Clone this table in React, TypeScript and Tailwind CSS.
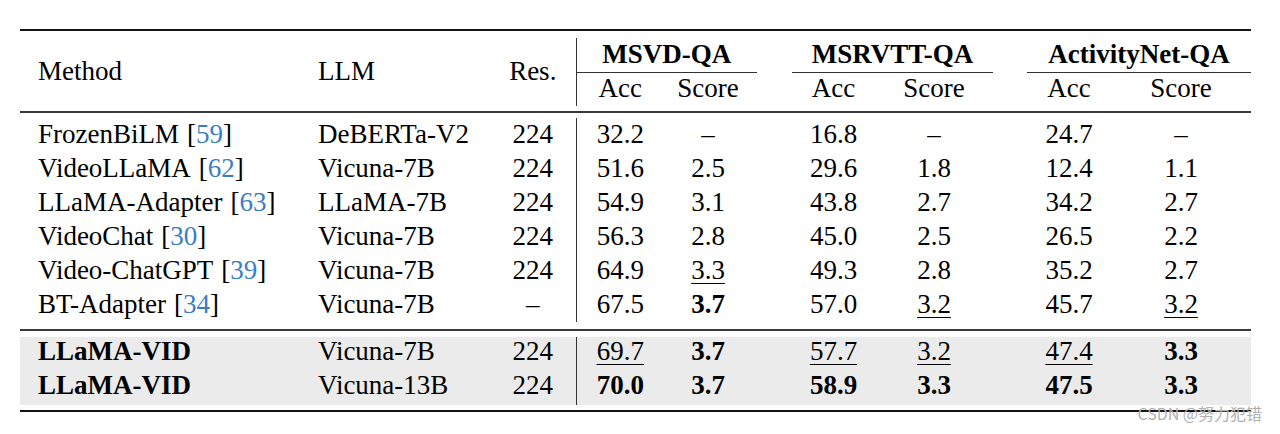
type Cell = { v: string; b?: boolean; u?: boolean };

type Row = {
  method: string;
  cite?: string;
  llm: string;
  res: string;
  vals: Cell[];
  ours?: boolean;
};

const c = (v: string, opts: { b?: boolean; u?: boolean } = {}): Cell => ({ v, ...opts });

const BASELINES: Row[] = [
  { method: 'FrozenBiLM', cite: '59', llm: 'DeBERTa-V2', res: '224', vals: [c('32.2'), c('–'), c('16.8'), c('–'), c('24.7'), c('–')] },
  { method: 'VideoLLaMA', cite: '62', llm: 'Vicuna-7B', res: '224', vals: [c('51.6'), c('2.5'), c('29.6'), c('1.8'), c('12.4'), c('1.1')] },
  { method: 'LLaMA-Adapter', cite: '63', llm: 'LLaMA-7B', res: '224', vals: [c('54.9'), c('3.1'), c('43.8'), c('2.7'), c('34.2'), c('2.7')] },
  { method: 'VideoChat', cite: '30', llm: 'Vicuna-7B', res: '224', vals: [c('56.3'), c('2.8'), c('45.0'), c('2.5'), c('26.5'), c('2.2')] },
  { method: 'Video-ChatGPT', cite: '39', llm: 'Vicuna-7B', res: '224', vals: [c('64.9'), c('3.3', { u: true }), c('49.3'), c('2.8'), c('35.2'), c('2.7')] },
  { method: 'BT-Adapter', cite: '34', llm: 'Vicuna-7B', res: '–', vals: [c('67.5'), c('3.7', { b: true }), c('57.0'), c('3.2', { u: true }), c('45.7'), c('3.2', { u: true })] },
];

const OURS: Row[] = [
  { method: 'LLaMA-VID', llm: 'Vicuna-7B', res: '224', ours: true, vals: [c('69.7', { u: true }), c('3.7', { b: true }), c('57.7', { u: true }), c('3.2', { u: true }), c('47.4', { u: true }), c('3.3', { b: true })] },
  { method: 'LLaMA-VID', llm: 'Vicuna-13B', res: '224', ours: true, vals: [c('70.0', { b: true }), c('3.7', { b: true }), c('58.9', { b: true }), c('3.3', { b: true }), c('47.5', { b: true }), c('3.3', { b: true })] },
];

function Rule({ thick }: { thick?: boolean }) {
  return (
    <tr>
      <td colSpan={11} className={`p-0 ${thick ? 'h-[2px] bg-[#141414]' : 'h-[2px] bg-[#3a3a3a]'}`} />
    </tr>
  );
}

function Spacer({ h }: { h: string }) {
  return (
    <tr className={h}>
      <td colSpan={11} className="p-0" />
    </tr>
  );
}

function Value({ cell, className = '' }: { cell: Cell; className?: string }) {
  return (
    <td className={`p-0 text-center ${className}`}>
      <span
        className={`${cell.b ? 'font-bold' : ''} ${cell.u ? 'underline decoration-1 underline-offset-[4px]' : ''}`}
      >
        {cell.v}
      </span>
    </td>
  );
}

function DataRow({ row }: { row: Row }) {
  const shade = row.ours ? 'bg-[#ebebeb]' : '';
  const pad = row.ours ? 'pb-[4px]' : '';
  return (
    <tr className={`h-[34px] ${shade}`}>
      <td className={`p-0 pl-[18px] ${pad} ${row.ours ? 'font-bold' : ''}`}>
        {row.method}
        {row.cite && (
          <span className="pl-[8px]">
            [<span className="text-[#3b7ec3]">{row.cite}</span>]
          </span>
        )}
      </td>
      <td className={`p-0 pl-[18px] ${pad}`}>{row.llm}</td>
      <td className={`p-0 text-center ${pad}`}>{row.res}</td>
      <Value cell={row.vals[0]} className={`border-l border-[#333] ${pad}`} />
      <Value cell={row.vals[1]} className={`pr-[5px] ${pad}`} />
      <td className="p-0" />
      <Value cell={row.vals[2]} className={pad} />
      <Value cell={row.vals[3]} className={pad} />
      <td className="p-0" />
      <Value cell={row.vals[4]} className={pad} />
      <Value cell={row.vals[5]} className={pad} />
    </tr>
  );
}

export default function App() {
  return (
    <div className="relative h-[434px] w-[1280px] overflow-hidden bg-white pt-[29px] pl-[20px] text-[27px] text-black font-['Liberation_Serif',serif]">
      <table className="w-[1231px] table-fixed border-collapse leading-[1.1]">
        <colgroup>
          <col className="w-[280px]" />
          <col className="w-[190px]" />
          <col className="w-[86px]" />
          <col className="w-[88px]" />
          <col className="w-[93px]" />
          <col className="w-[35px]" />
          <col className="w-[83px]" />
          <col className="w-[118px]" />
          <col className="w-[34px]" />
          <col className="w-[84px]" />
          <col className="w-[140px]" />
        </colgroup>
        <tbody>
          <Rule thick />
          <Spacer h="h-[7px]" />
          <tr className="h-[34px]">
            <td rowSpan={2} className="p-0 pl-[18px]">Method</td>
            <td rowSpan={2} className="p-0 pl-[18px]">LLM</td>
            <td rowSpan={2} className="p-0 text-center">Res.</td>
            <td colSpan={2} className="border-b border-l border-[#333] p-0 text-center font-bold">MSVD-QA</td>
            <td className="p-0" />
            <td colSpan={2} className="border-b border-[#333] p-0 text-center font-bold">MSRVTT-QA</td>
            <td className="p-0" />
            <td colSpan={2} className="border-b border-[#333] p-0 text-center font-bold">ActivityNet-QA</td>
          </tr>
          <tr className="h-[34px]">
            <td className="border-l border-[#333] p-0 text-center">Acc</td>
            <td className="p-0 pr-[5px] text-center">Score</td>
            <td className="p-0" />
            <td className="p-0 text-center">Acc</td>
            <td className="p-0 text-center">Score</td>
            <td className="p-0" />
            <td className="p-0 text-center">Acc</td>
            <td className="p-0 text-center">Score</td>
          </tr>
          <Spacer h="h-[5px]" />
          <Rule />
          <Spacer h="h-[5px]" />
          {BASELINES.map((row) => (
            <DataRow key={row.method} row={row} />
          ))}
          <Spacer h="h-[7px]" />
          <Rule />
          <Spacer h="h-[6px]" />
          {OURS.map((row) => (
            <DataRow key={row.llm} row={row} />
          ))}
          <Spacer h="h-[5px]" />
          <Rule thick />
        </tbody>
      </table>

      <span className="absolute top-[405px] right-[18px] text-[16px] leading-none text-[#b0b0b0] font-['Noto_Sans_CJK_SC',sans-serif]">
        CSDN @努力犯错
      </span>
    </div>
  );
}
